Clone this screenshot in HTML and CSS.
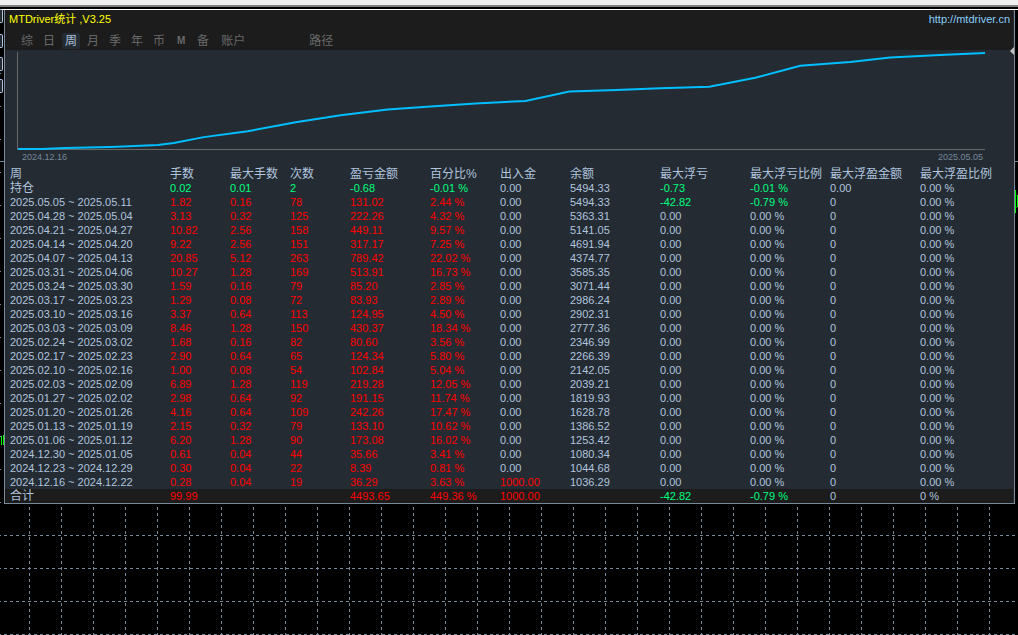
FILE: index.html
```html
<!DOCTYPE html>
<html lang="zh-CN">
<head>
    <meta charset="UTF-8">
    <meta name="viewport" content="width=device-width, initial-scale=1.0">
    <title>MTDriver统计</title>
    <link rel="stylesheet" href="styles.css">
</head>
<body>
    <div class="window-edge"></div>
    <div class="chart">
        <div class="side-button side-button-1"></div>
        <div class="side-button side-button-2"></div>
        <div class="side-button side-button-3"></div>
        <div class="side-button side-button-4"></div>
        <div class="price-line"></div>
        <div class="candle candle-left"></div>
        <div class="candle candle-left-2"></div>
        <div class="candle candle-right"></div>
        <div class="candle candle-right-2"></div>

        <main class="panel">
            <header class="panel-header">
                <div class="title-row">
                    <h1>MTDriver统计 ,V3.25</h1>
                    <a href="http://mtdriver.cn">http://mtdriver.cn</a>
                </div>
                <nav class="tabs">
                    <button type="button">综</button>
                    <button type="button">日</button>
                    <button type="button" class="active">周</button>
                    <button type="button">月</button>
                    <button type="button">季</button>
                    <button type="button">年</button>
                    <button type="button">币</button>
                    <button type="button" class="letter">M</button>
                    <button type="button">备</button>
                    <button type="button" class="wide">账户</button>
                    <button type="button" class="wide path">路径</button>
                </nav>
            </header>
            <div class="scroll-arrow"></div>

            <section class="balance">
                <div class="plot">
                    <svg viewBox="0 0 968 98" preserveAspectRatio="none">
                        <polyline points="0,98 24,98 47,97 93,96 140,94 156,92 186,86 230,80 278,71 323,64 370,58 413,55 458,52 508,49.5 552,40 599,38.5 643,36.5 692,35 738,26 783,14 833,10 873,5.5 923,3 968,1"/>
                    </svg>
                </div>
                <div class="dates">
                    <span>2024.12.16</span>
                    <span>2025.05.05</span>
                </div>
            </section>

            <table>
                <colgroup>
                    <col class="c-period"><col class="c-60"><col class="c-60"><col class="c-60">
                    <col class="c-80"><col class="c-70"><col class="c-70"><col class="c-90">
                    <col class="c-90"><col class="c-80"><col class="c-90"><col>
                </colgroup>
                <thead>
                    <tr>
                        <th>周</th><th>手数</th><th>最大手数</th><th>次数</th>
                        <th>盈亏金额</th><th>百分比%</th><th>出入金</th><th>余额</th>
                        <th>最大浮亏</th><th>最大浮亏比例</th><th>最大浮盈金额</th><th>最大浮盈比例</th>
                    </tr>
                </thead>
                <tbody id="rows">
                    <tr>
                        <td class="label">持仓</td><td class="down">0.02</td><td class="down">0.01</td><td class="down">2</td>
                        <td class="down">-0.68</td><td class="down">-0.01 %</td><td>0.00</td><td>5494.33</td>
                        <td class="down">-0.73</td><td class="down">-0.01 %</td><td>0.00</td><td>0.00 %</td>
                    </tr>
                </tbody>
                <tfoot>
                    <tr>
                        <td class="label">合计</td><td class="up">99.99</td><td></td><td></td>
                        <td class="up">4493.65</td><td class="up">449.36 %</td><td class="up">1000.00</td><td></td>
                        <td class="down">-42.82</td><td class="down">-0.79 %</td><td>0</td><td>0 %</td>
                    </tr>
                </tfoot>
            </table>
        </main>
    </div>
    <script src="script.js"></script>
</body>
</html>
```
FILE: styles.css
```css
* {
    box-sizing: border-box;
}
body {
    margin: 0;
    min-height: 100vh;
    overflow: hidden;
    font-family: "Liberation Sans", Arial, "Noto Sans CJK SC", sans-serif;
    font-size: 11px;
    line-height: 14px;
    color: #b0c4de;
    /* dashed chart grid: vertical lines, then horizontal lines */
    background-color: #000;
    background-image:
        conic-gradient(from 270deg at 1px 3px, #778899 90deg, transparent 0),
        conic-gradient(from 270deg at 3px 1px, #778899 90deg, transparent 0);
    background-size: 32px 6px, 6px 33px;
    background-position: 29px 3px, 4px 7px;
}
.window-edge {
    height: 7px;
    background-color: #f0f0f0;
    border-bottom: 2px solid #808080;
    box-shadow: 0 2px 0 #000;
}
.chart {
    position: relative;
    margin-top: 2px;
    border-top: 1px solid #fff;
}

/* things that peek out beside the panel */
.side-button {
    position: absolute;
    left: 0;
    width: 3px;
    height: 14px;
    background-color: #242b33;
    border: 1px solid #b0c4de;
    border-left: none;
    border-radius: 0 2px 2px 0;
}
.side-button-1 { top: -1px; }
.side-button-2 { top: 24px; }
.side-button-3 { top: 47px; }
.side-button-4 { top: 69px; }
.price-line {
    position: absolute;
    top: 151px;
    left: 0;
    right: 0;
    height: 1px;
    background-color: #778899;
}
.candle {
    position: absolute;
    width: 1px;
    background-color: #00ff00;
}
.candle-left { left: 1px; top: 426px; height: 9px; }
.candle-left-2 { left: 3px; top: 425px; height: 10px; }
.candle-right { right: 2px; top: 180px; height: 23px; }
.candle-right-2 { right: 0; top: 185px; height: 12px; }

.panel {
    position: relative;
    margin: 0 3px 0 4px;
    padding-right: 1px;
    background-color: #242b33;
    border: 1px solid #778899;
    border-top: none;
}
.panel-header {
    height: 40px;
    background-color: #1c1c1c;
}
.title-row {
    display: flex;
    justify-content: space-between;
    height: 23px;
    padding: 2px 3px 0 4px;
}
h1 {
    margin: 0;
    font-size: 11px;
    font-weight: normal;
    color: #ffff00;
}
a {
    color: #87cefa;
    text-decoration: none;
}
.tabs {
    display: flex;
    gap: 4px;
    padding-left: 13px;
}
.tabs button {
    height: 16px;
    padding: 0 3px;
    border: none;
    border-radius: 2px;
    background: none;
    font-family: inherit;
    font-size: 12px;
    line-height: 16px;
    color: #696969;
    cursor: pointer;
}
.tabs .active {
    background-color: #242b33;
    color: #b0c4de;
}
.tabs .letter {
    width: 18px;
    font-size: 10px;
    font-weight: bold;
}
.tabs .wide {
    padding: 0 5px;
}
.tabs .path {
    margin-left: 50px;
}
.scroll-arrow {
    position: absolute;
    top: 37px;
    right: 0;
    border: 4px solid transparent;
    border-right-color: #c0c0c0;
    border-left: none;
}

.balance {
    height: 117px;
    padding: 2px 28px 0 12px;
}
.plot {
    height: 98px;
    border-left: 1px solid #696969;
    border-bottom: 1px solid #696969;
}
.plot svg {
    display: block;
    width: 100%;
    height: 100%;
    overflow: visible;
}
.plot polyline {
    fill: none;
    stroke: #00bfff;
    stroke-width: 2;
    vector-effect: non-scaling-stroke;
}
.dates {
    display: flex;
    justify-content: space-between;
    padding: 0 2px 0 5px;
    font-size: 9px;
    color: #778899;
}

table {
    width: 100%;
    table-layout: fixed;
    border-collapse: collapse;
}
.c-period { width: 165px; }
.c-60 { width: 60px; }
.c-70 { width: 70px; }
.c-80 { width: 80px; }
.c-90 { width: 90px; }
th, td {
    height: 14px;
    padding: 0;
    text-align: left;
    font-weight: normal;
    white-space: nowrap;
}
th, .label {
    font-size: 12px;
}
th:first-child, td:first-child {
    padding-left: 5px;
}
tfoot {
    background-color: #1c1c1c;
}
.up {
    color: #ff0000;
}
.down {
    color: #00ff7f;
}
```
FILE: script.js
```js
// period, lots, max lots, trades, profit, percent, balance
const weeks = [
    ['2025.05.05 ~ 2025.05.11', '1.82', '0.16', '78', '131.02', '2.44', '5494.33'],
    ['2025.04.28 ~ 2025.05.04', '3.13', '0.32', '125', '222.26', '4.32', '5363.31'],
    ['2025.04.21 ~ 2025.04.27', '10.82', '2.56', '158', '449.11', '9.57', '5141.05'],
    ['2025.04.14 ~ 2025.04.20', '9.22', '2.56', '151', '317.17', '7.25', '4691.94'],
    ['2025.04.07 ~ 2025.04.13', '20.85', '5.12', '263', '789.42', '22.02', '4374.77'],
    ['2025.03.31 ~ 2025.04.06', '10.27', '1.28', '169', '513.91', '16.73', '3585.35'],
    ['2025.03.24 ~ 2025.03.30', '1.59', '0.16', '79', '85.20', '2.85', '3071.44'],
    ['2025.03.17 ~ 2025.03.23', '1.29', '0.08', '72', '83.93', '2.89', '2986.24'],
    ['2025.03.10 ~ 2025.03.16', '3.37', '0.64', '113', '124.95', '4.50', '2902.31'],
    ['2025.03.03 ~ 2025.03.09', '8.46', '1.28', '150', '430.37', '18.34', '2777.36'],
    ['2025.02.24 ~ 2025.03.02', '1.68', '0.16', '82', '80.60', '3.56', '2346.99'],
    ['2025.02.17 ~ 2025.02.23', '2.90', '0.64', '65', '124.34', '5.80', '2266.39'],
    ['2025.02.10 ~ 2025.02.16', '1.00', '0.08', '54', '102.84', '5.04', '2142.05'],
    ['2025.02.03 ~ 2025.02.09', '6.89', '1.28', '119', '219.28', '12.05', '2039.21'],
    ['2025.01.27 ~ 2025.02.02', '2.98', '0.64', '92', '191.15', '11.74', '1819.93'],
    ['2025.01.20 ~ 2025.01.26', '4.16', '0.64', '109', '242.26', '17.47', '1628.78'],
    ['2025.01.13 ~ 2025.01.19', '2.15', '0.32', '79', '133.10', '10.62', '1386.52'],
    ['2025.01.06 ~ 2025.01.12', '6.20', '1.28', '90', '173.08', '16.02', '1253.42'],
    ['2024.12.30 ~ 2025.01.05', '0.61', '0.04', '44', '35.66', '3.41', '1080.34'],
    ['2024.12.23 ~ 2024.12.29', '0.30', '0.04', '22', '8.39', '0.81', '1044.68'],
    ['2024.12.16 ~ 2024.12.22', '0.28', '0.04', '19', '36.29', '3.63', '1036.29']
];

const tbody = document.getElementById('rows');

function addCell(row, text, className) {
    const cell = row.insertCell();
    cell.textContent = text;
    if (className) {
        cell.className = className;
    }
}

weeks.forEach(([period, lots, maxLots, trades, profit, percent, balance], i) => {
    const row = tbody.insertRow();
    const current = i === 0;
    const first = i === weeks.length - 1;
    addCell(row, period);
    addCell(row, lots, 'up');
    addCell(row, maxLots, 'up');
    addCell(row, trades, 'up');
    addCell(row, profit, 'up');
    addCell(row, percent + ' %', 'up');
    addCell(row, first ? '1000.00' : '0.00', first ? 'up' : '');
    addCell(row, balance);
    addCell(row, current ? '-42.82' : '0.00', current ? 'down' : '');
    addCell(row, current ? '-0.79 %' : '0.00 %', current ? 'down' : '');
    addCell(row, '0');
    addCell(row, '0.00 %');
});
```
